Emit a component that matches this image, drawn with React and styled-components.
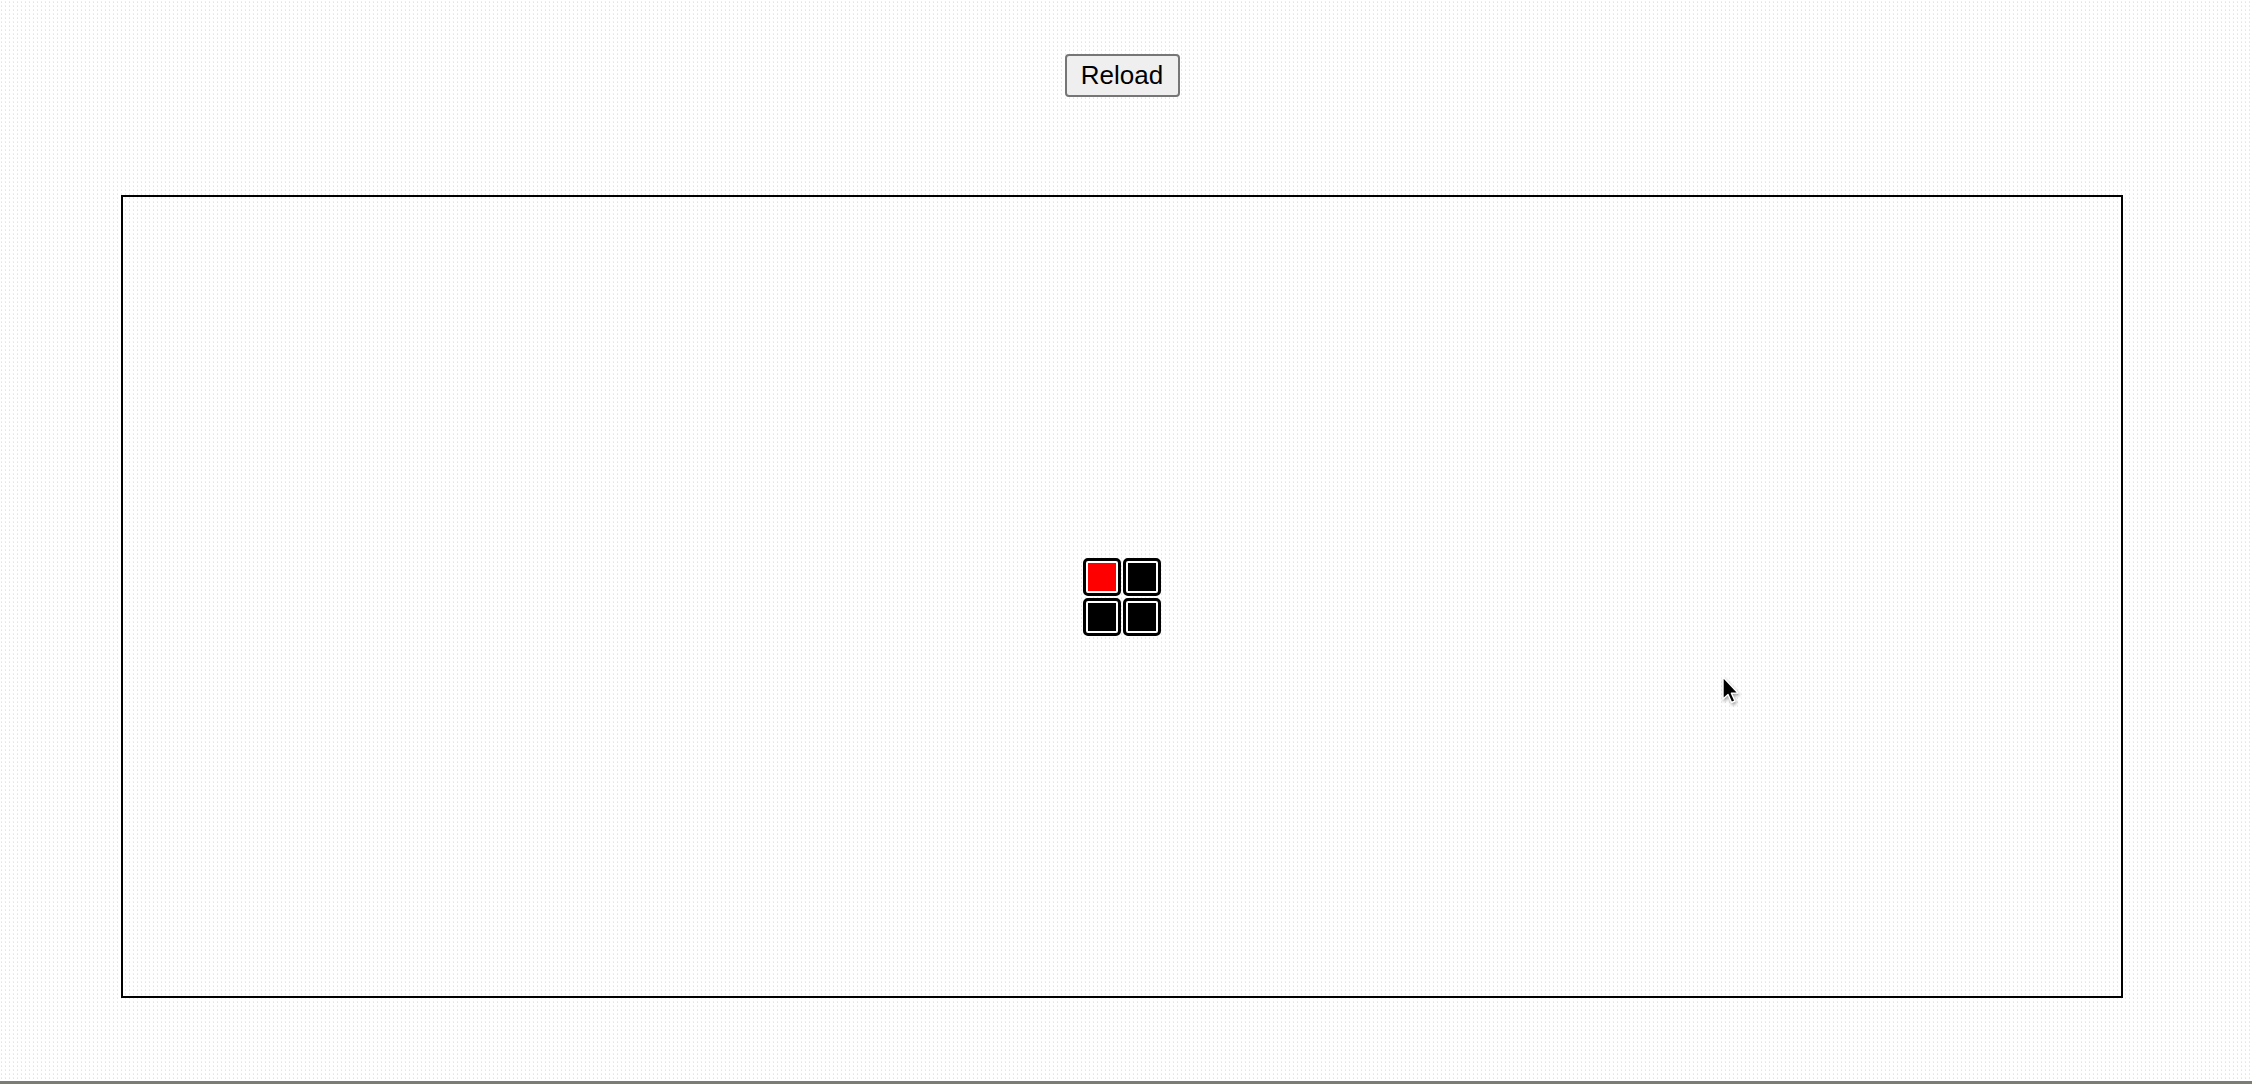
import React from 'react'
import styled, { createGlobalStyle } from 'styled-components'

const GlobalStyle = createGlobalStyle`
  html, body {
    margin: 0;
    padding: 0;
  }
  body {
    font-family: "Liberation Sans", Arial, sans-serif;
    background-color: #ffffff;
    background-image:
      radial-gradient(circle at 1.5px 1.5px, #f8f3b4 0.5px, transparent 0.8px),
      radial-gradient(circle at 1.5px 2.5px, #e2e2f8 0.5px, transparent 0.8px);
    background-size: 4px 4px, 4px 4px;
  }
`

const Page = styled.div`
  box-sizing: border-box;
  height: 1084px;
  padding: 54px 129px 0 121px;
  display: flex;
  flex-direction: column;
  align-items: center;
  border-bottom: 3px solid #7c7c74;
  position: relative;
`

const ReloadButton = styled.button`
  box-sizing: border-box;
  width: 115px;
  height: 43px;
  font-family: "Liberation Sans", Arial, sans-serif;
  font-size: 26px;
  color: #000;
  background: #efefef;
  border: 2px solid #767676;
  border-radius: 4px;
  padding: 0;
  cursor: default;
`

const Board = styled.div`
  box-sizing: border-box;
  margin-top: 98px;
  width: 2002px;
  height: 803px;
  border: 2px solid #000;
  display: flex;
  align-items: center;
  justify-content: center;
`

const Grid = styled.div`
  display: grid;
  grid-template-columns: repeat(2, 38px);
  grid-template-rows: repeat(2, 38px);
  gap: 2px;
`

const Cell = styled.div`
  box-sizing: border-box;
  border: 3px solid #000;
  border-radius: 5px;
  padding: 2px;
  background: #fff;
  &::after {
    content: '';
    display: block;
    width: 100%;
    height: 100%;
    background: ${p => (p.$active ? '#ff0000' : '#000')};
  }
`

const Pointer = styled.svg`
  position: absolute;
  left: 1719px;
  top: 674px;
  width: 22px;
  height: 32px;
  filter: drop-shadow(1px 2px 1.5px rgba(0, 0, 0, 0.35));
`

export default function App() {
  const cells = [true, false, false, false]
  return (
    <>
      <GlobalStyle />
      <Page>
        <ReloadButton>Reload</ReloadButton>
        <Board>
          <Grid>
            {cells.map((on, i) => (
              <Cell key={i} $active={on} />
            ))}
          </Grid>
        </Board>
        <Pointer viewBox="0 0 22 32">
          <path
            d="M4 3 L4 25 L9 20.5 L12.6 28.5 L16 27 L12.4 19.2 L19 19 Z"
            fill="#000"
            stroke="#fff"
            strokeWidth="1.4"
            strokeLinejoin="round"
          />
        </Pointer>
      </Page>
    </>
  )
}
